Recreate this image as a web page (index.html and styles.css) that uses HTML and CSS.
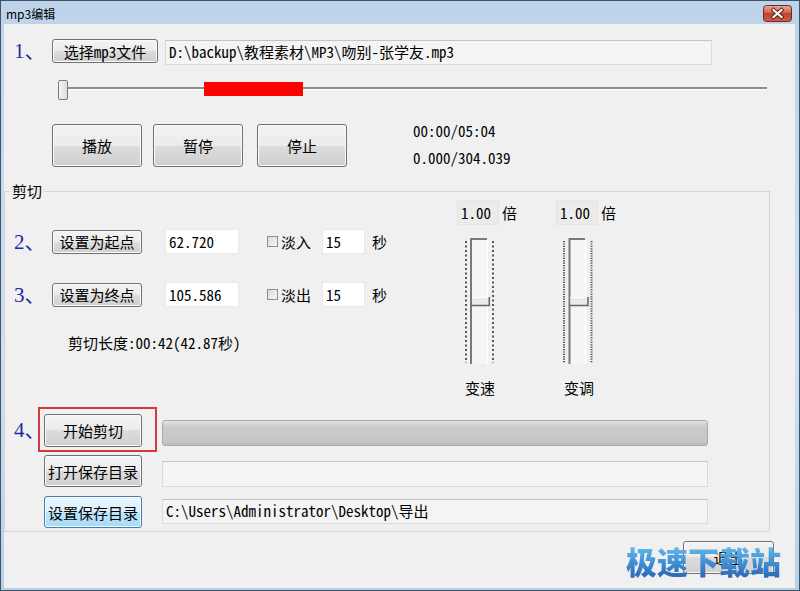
FILE: index.html
```html
<!DOCTYPE html>
<html>

<head>
  <meta charset="utf-8">
  <title>mp3编辑</title>
  <link rel="stylesheet" href="styles.css">
</head>

<body>
  <div class="window">
    <!-- タイトルバー -->
    <div class="titlebar">
      <span class="title">mp3编辑</span>
      <span class="close">
        <svg width="29" height="17" viewBox="0 0 29 17">
          <defs>
            <linearGradient id="closeBg" x1="0" y1="0" x2="0" y2="1">
              <stop offset="0" stop-color="#e8aa9c" />
              <stop offset="0.45" stop-color="#d26350" />
              <stop offset="0.5" stop-color="#c0422c" />
              <stop offset="1" stop-color="#d0604a" />
            </linearGradient>
          </defs>
          <rect x="0.5" y="0.5" width="28" height="16" rx="3" fill="url(#closeBg)" stroke="#6c2a22" />
          <path d="M10.5 5 L18.5 12 M18.5 5 L10.5 12" stroke="#5a1d16" stroke-width="4" stroke-linecap="square" />
          <path d="M10.5 5 L18.5 12 M18.5 5 L10.5 12" stroke="#fff" stroke-width="2.2" stroke-linecap="square" />
        </svg>
      </span>
    </div>

    <div class="client">
      <div class="row row-file">
        <span class="step">1、</span>
        <button class="btn btn-file">选择mp3文件</button>
        <div class="field field-path">D:\backup\教程素材\MP3\吻别-张学友.mp3</div>
      </div>

      <div class="seek">
        <div class="seek-track"></div>
        <div class="seek-mark"></div>
        <div class="seek-thumb"></div>
      </div>

      <div class="row row-play">
        <button class="btn btn-big">播放</button>
        <button class="btn btn-big btn-pause">暂停</button>
        <button class="btn btn-big btn-stop">停止</button>
        <div class="time">
          <span>00:00/05:04</span>
          <span>0.000/304.039</span>
        </div>
      </div>

      <fieldset class="cut">
        <legend>剪切</legend>
        <div class="cut-top">
          <div class="cut-params">
            <div class="row row-point">
              <span class="step">2、</span>
              <button class="btn btn-small">设置为起点</button>
              <input class="num" value="62.720">
              <label class="check"><span class="box"></span>淡入</label>
              <input class="num num-fade" value="15">
              <span class="unit">秒</span>
            </div>
            <div class="row row-point row-end">
              <span class="step">3、</span>
              <button class="btn btn-small">设置为终点</button>
              <input class="num" value="105.586">
              <label class="check"><span class="box"></span>淡出</label>
              <input class="num num-fade" value="15">
              <span class="unit">秒</span>
            </div>
            <div class="length">剪切长度:00:42(42.87秒)</div>
          </div>

          <div class="tempo">
            <div class="knob">
              <div class="ratio"><span class="ratio-box">1.00</span>倍</div>
              <svg class="vslider" width="34" height="129" viewBox="0 0 34 129">
                <rect x="10" y="4" width="15" height="124" fill="#f5f5f5" />
                <line x1="4" y1="5" x2="4" y2="127" stroke="#555" stroke-width="2" stroke-dasharray="2 2.5" />
                <line x1="31" y1="5" x2="31" y2="127" stroke="#555" stroke-width="2" stroke-dasharray="2 2.5" />
                <line x1="25.5" y1="4" x2="25.5" y2="128" stroke="#fff" stroke-width="1" />
                <path d="M9 128 V3 H25" stroke="#7a7a7a" stroke-width="2" fill="none" />
                <rect x="10" y="61" width="17" height="8" fill="#ebebeb" />
                <line x1="10" y1="61.5" x2="26" y2="61.5" stroke="#fff" stroke-width="1" />
                <path d="M9 69.5 H27.3 V61" stroke="#666" stroke-width="1.5" fill="none" />
              </svg>
              <div class="knob-label">变速</div>
            </div>
            <div class="knob">
              <div class="ratio"><span class="ratio-box">1.00</span>倍</div>
              <svg class="vslider" width="34" height="129" viewBox="0 0 34 129">
                <rect x="9" y="4" width="15" height="124" fill="#f5f5f5" />
                <line x1="3" y1="5" x2="3" y2="127" stroke="#555" stroke-width="2" stroke-dasharray="1.2 1.2" />
                <line x1="30.5" y1="5" x2="30.5" y2="127" stroke="#555" stroke-width="2" stroke-dasharray="1.2 1.2" />
                <line x1="24.5" y1="4" x2="24.5" y2="128" stroke="#fff" stroke-width="1" />
                <path d="M8.5 128 V3 H24" stroke="#7a7a7a" stroke-width="2" fill="none" />
                <rect x="9.5" y="61" width="17" height="8" fill="#ebebeb" />
                <line x1="9.5" y1="61.5" x2="26" y2="61.5" stroke="#fff" stroke-width="1" />
                <path d="M8.5 69.5 H27 V61" stroke="#666" stroke-width="1.5" fill="none" />
              </svg>
              <div class="knob-label">变调</div>
            </div>
          </div>
        </div>

        <div class="output">
          <div class="row row-run">
            <span class="step">4、</span>
            <span class="mark"><button class="btn btn-out btn-run">开始剪切</button></span>
            <div class="progress"></div>
          </div>
          <div class="row row-dir">
            <button class="btn btn-out">打开保存目录</button>
            <div class="field field-out field-open"></div>
          </div>
          <div class="row row-dir row-save">
            <button class="btn btn-out btn-hot">设置保存目录</button>
            <div class="field field-out">C:\Users\Administrator\Desktop\导出</div>
          </div>
        </div>
      </fieldset>

      <div class="footer">
        <button class="btn btn-exit">退出</button>
      </div>

      <div class="watermark">极速下载站</div>
    </div>
  </div>
</body>

</html>
```

FILE: styles.css
```css
/* ウィンドウ全体 */
body {
  margin: 0;
  font-family: "Noto Sans Mono CJK SC", "Liberation Mono", "Noto Sans CJK SC", monospace;
  font-size: 15px;
  color: #000;
}

.window {
  box-sizing: border-box;
  width: 800px;
  height: 591px;
  display: flex;
  flex-direction: column;
  border: 1px solid #3f5469;
  padding: 0 4px 2px 3px;
  background: linear-gradient(#bcd3ea, #cfe0f1 60%, #b7d0e6);
}

.titlebar {
  height: 23px;
  display: flex;
  align-items: center;
  justify-content: space-between;
}

.title {
  font-family: "Noto Sans CJK SC", sans-serif;
  font-size: 12px;
  line-height: 16px;
  margin-left: 2px;
  margin-top: 2px;
}

.close {
  display: flex;
  margin-right: 3px;
  margin-top: 2px;
}

.client {
  flex: 1;
  position: relative;
  background: #f0f0f0;
  display: flex;
  flex-direction: column;
}

/* 共通パーツ */
.row {
  display: flex;
  align-items: flex-start;
}

.step {
  width: 38px;
  flex-shrink: 0;
  font-family: "Liberation Serif", "Noto Sans CJK SC", serif;
  font-size: 21px;
  line-height: 24px;
  color: #1f2aa0;
}

.btn {
  box-sizing: border-box;
  padding: 0;
  font-family: inherit;
  font-size: 15px;
  color: #000;
  border: 1px solid #707070;
  border-radius: 3px;
  background: linear-gradient(#f3f3f3 0%, #ebebeb 50%, #dddddd 50%, #cfcfcf 100%);
  box-shadow: inset 0 0 0 1px #fbfbfb;
}

.btn-hot {
  border-color: #3c7fb1;
  background: linear-gradient(#eaf6fd 0%, #d9f0fc 50%, #bee6fd 50%, #a7d9f5 100%);
}

.field {
  box-sizing: border-box;
  border: 1px solid #dadada;
  border-top-color: #c4c4c4;
  background: #f4f4f4;
  padding-left: 3px;
  white-space: nowrap;
}

/* 1. ファイル選択 */
.row-file {
  margin-top: 15px;
  padding-left: 10px;
  height: 26px;
}

.btn-file {
  width: 106px;
  height: 24px;
}

.field-path {
  margin-left: 7px;
  margin-top: 1px;
  width: 547px;
  height: 25px;
  line-height: 22px;
}

/* シークバー */
.seek {
  position: relative;
  margin: 15px 0 0 54px;
  width: 709px;
  height: 20px;
}

.seek-track {
  margin-top: 7px;
  height: 2px;
  background: #8d8d8d;
  border-bottom: 1px solid #fdfdfd;
}

.seek-mark {
  position: absolute;
  left: 146px;
  top: 2px;
  width: 99px;
  height: 14px;
  background: #ff0000;
}

.seek-thumb {
  position: absolute;
  left: 0;
  top: 0;
  box-sizing: border-box;
  width: 10px;
  height: 20px;
  border: 1px solid #7a7a7a;
  border-radius: 2px;
  background: linear-gradient(90deg, #f6f6f6, #dcdcdc);
}

/* 再生ボタン */
.row-play {
  margin-top: 24px;
  padding-left: 48px;
  height: 43px;
}

.btn-big {
  width: 90px;
  height: 43px;
}

.btn-pause {
  margin-left: 11px;
}

.btn-stop {
  margin-left: 14px;
}

.time {
  display: flex;
  flex-direction: column;
  gap: 9px;
  margin-left: 66px;
  margin-top: -2px;
  line-height: 18px;
}

/* 剪切 */
.cut {
  margin: 15px 25px 0 0;
  padding: 0;
  min-width: 0;
  border: 1px solid #d5d5d5;
  border-radius: 0;
}

.cut legend {
  margin-left: 5px;
  padding: 0 2px;
  line-height: 18px;
}

.cut-top {
  display: flex;
}

.cut-params {
  width: 452px;
  padding-top: 28px;
}

.row-point {
  padding-left: 9px;
  height: 27px;
  align-items: center;
}

.row-end {
  margin-top: 26px;
}

.btn-small {
  width: 90px;
  height: 24px;
}

.num {
  box-sizing: border-box;
  margin: 0 0 0 23px;
  width: 74px;
  height: 25px;
  padding: 0 0 0 3px;
  border: 1px solid #e8e8e8;
  background: #fff;
  font-family: inherit;
  font-size: 15px;
  outline: none;
}

.num-fade {
  margin-left: 11px;
  width: 43px;
}

.check {
  display: flex;
  align-items: center;
  margin-left: 28px;
}

.check .box {
  box-sizing: border-box;
  width: 11px;
  height: 11px;
  margin-right: 3px;
  border: 1px solid #8e8f8f;
  background: linear-gradient(135deg, #dadada, #f7f7f7);
}

.unit {
  margin-left: 7px;
  line-height: 26px;
}

.length {
  margin-top: 26px;
  padding-left: 63px;
  line-height: 18px;
}

.tempo {
  display: flex;
}

.knob {
  width: 99px;
  display: flex;
  flex-direction: column;
  align-items: flex-start;
}

.ratio {
  display: flex;
  align-items: center;
  height: 25px;
}

.ratio-box {
  box-sizing: border-box;
  width: 42px;
  height: 25px;
  padding-left: 3px;
  margin-right: 3px;
  line-height: 23px;
  border: 1px solid #e6e6e6;
  background: #ebebeb;
}

.vslider {
  display: block;
  margin: 11px 0 0 5px;
}

.knob-label {
  margin: 14px 0 0 8px;
  line-height: 18px;
}

/* 出力 */
.output {
  margin-top: 10px;
  padding-bottom: 3px;
}

.row-run {
  padding-left: 9px;
  align-items: center;
}

.row-run .step {
  width: 24px;
}

.mark {
  display: flex;
  border: 2px solid #d8383a;
  padding: 5px 13px 3px 4px;
}

.btn-out {
  width: 98px;
  height: 32px;
}

.btn-run {
  height: 33px;
}

.progress {
  box-sizing: border-box;
  align-self: flex-start;
  margin: 13px 0 0 5px;
  width: 546px;
  height: 26px;
  border: 1px solid #a9a9a9;
  border-radius: 3px;
  background: linear-gradient(#e2e2e2, #cbcbcb 25%, #c6c6c6 85%, #b9b9b9);
}

.row-dir {
  margin-top: 3px;
  padding-left: 39px;
}

.field-out {
  margin-left: 20px;
  margin-top: 6px;
  width: 546px;
  height: 26px;
  line-height: 23px;
}

.row-save {
  margin-top: 9px;
}

.row-save .field-out {
  margin-top: 3px;
  height: 25px;
  line-height: 22px;
}

/* 下部 */
.footer {
  display: flex;
  justify-content: flex-end;
  padding-right: 21px;
  margin-top: 9px;
}

.btn-exit {
  width: 91px;
  height: 33px;
}

.watermark {
  position: absolute;
  right: 14px;
  bottom: 9px;
  font-family: "Noto Sans CJK SC", sans-serif;
  font-size: 31px;
  font-weight: 900;
  line-height: 36px;
  letter-spacing: 0;
  background: linear-gradient(#6cc3ef, #3f8fd4 55%, #2a63b3);
  -webkit-background-clip: text;
  background-clip: text;
  color: transparent;
}
```
